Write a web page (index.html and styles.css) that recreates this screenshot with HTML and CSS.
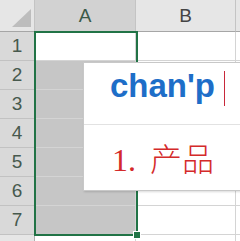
FILE: index.html
```html
<!DOCTYPE html>
<html>
<head>
    <title>Sheet</title>
    <link rel="stylesheet" href="styles.css">
</head>
<body>
    <div class="sheet">
        <div class="grid">
            <!-- header row -->
            <div class="corner"><span class="corner-tri"></span></div>
            <div class="col-head sel">A</div>
            <div class="col-head">B</div>
            <div class="col-head"></div>

            <div class="row-head">1</div><div class="cell"></div><div class="cell"></div><div class="cell"></div>
            <div class="row-head">2</div><div class="cell picked"></div><div class="cell"></div><div class="cell"></div>
            <div class="row-head">3</div><div class="cell picked"></div><div class="cell"></div><div class="cell"></div>
            <div class="row-head">4</div><div class="cell picked"></div><div class="cell"></div><div class="cell"></div>
            <div class="row-head">5</div><div class="cell picked"></div><div class="cell"></div><div class="cell"></div>
            <div class="row-head">6</div><div class="cell picked"></div><div class="cell"></div><div class="cell"></div>
            <div class="row-head">7</div><div class="cell picked"></div><div class="cell"></div><div class="cell"></div>
            <div class="row-head plain"></div><div class="cell"></div><div class="cell"></div><div class="cell"></div>
        </div>

        <!-- selection box A1:A7 -->
        <div class="selection"><span class="handle"></span></div>

        <!-- IME candidate window -->
        <div class="ime">
            <div class="ime-input">chan'p<span class="caret"></span></div>
            <div class="ime-cand"><span class="num">1.</span><span class="word">产品</span></div>
        </div>
    </div>
</body>
</html>
```

FILE: styles.css
```css
body {
    margin: 0;
    padding: 0;
    background-color: #fff;
    font-family: "Liberation Sans", Arial, sans-serif;
    overflow: hidden;
}

.sheet {
    position: relative;
    width: 240px;
    height: 241px;
    overflow: hidden;
}

.grid {
    display: grid;
    grid-template-columns: 35px 101px 100px 20px;
    grid-template-rows: 32px repeat(7, 29px) 20px;
}

.grid > div {
    box-sizing: border-box;
}

.corner {
    position: relative;
    background-color: #e6e6e6;
    border-right: 1px solid #c4c4c4;
    border-bottom: 1px solid #a6a6a6;
}

.corner-tri {
    position: absolute;
    right: 3px;
    bottom: 4px;
    width: 0;
    height: 0;
    border-left: 19px solid transparent;
    border-bottom: 18px solid #bdbdbd;
}

.col-head {
    display: flex;
    align-items: flex-end;
    justify-content: center;
    padding-bottom: 4px;
    background-color: #e6e6e6;
    border-right: 1px solid #c4c4c4;
    border-bottom: 1px solid #a6a6a6;
    color: #444;
    font-size: 19px;
}

.col-head.sel {
    background-color: #d2d2d2;
    color: #3b5a48;
    border-bottom: 1px solid #a6a6a6;
}

.row-head {
    display: flex;
    align-items: center;
    justify-content: center;
    background-color: #d9d9d9;
    border-right: 1px solid #b0b0b0;
    border-bottom: 1px solid #c2c2c2;
    color: #47594e;
    font-size: 19px;
}

.row-head.plain {
    background-color: #e6e6e6;
}

.cell {
    border-right: 1px solid #d4d4d4;
    border-bottom: 1px solid #d4d4d4;
}

.cell.picked {
    background-color: #c6c6c6;
}

.selection {
    position: absolute;
    left: 34px;
    top: 31px;
    width: 100px;
    height: 201px;
    border: 2px solid #217346;
}

.handle {
    position: absolute;
    right: -5px;
    bottom: -5px;
    width: 6px;
    height: 6px;
    background-color: #217346;
    border: 1px solid #fff;
}

.ime {
    position: absolute;
    left: 83px;
    top: 62px;
    width: 170px;
    height: 127px;
    background-color: #fff;
    border: 1px solid #c8c8c8;
    box-shadow: 1px 1px 2px rgba(0, 0, 0, 0.15);
}

.ime-input {
    height: 62px;
    box-sizing: border-box;
    padding: 5px 0 0 26px;
    border-bottom: 1px solid #e2e2e2;
    color: #1e6ec8;
    font-size: 33px;
    font-weight: bold;
    line-height: 36px;
}

.caret {
    display: inline-block;
    width: 1px;
    height: 35px;
    margin-left: 9px;
    vertical-align: -9px;
    background-color: #c8283a;
}

.ime-cand {
    padding: 12px 0 0 28px;
    color: #d42a2a;
    font-size: 32px;
    line-height: 40px;
}

.ime-cand .num {
    font-family: "Liberation Serif", "Times New Roman", serif;
    margin-right: 14px;
}

.ime-cand .word {
    font-family: "Noto Sans CJK SC", sans-serif;
    font-weight: 300;
}
```
